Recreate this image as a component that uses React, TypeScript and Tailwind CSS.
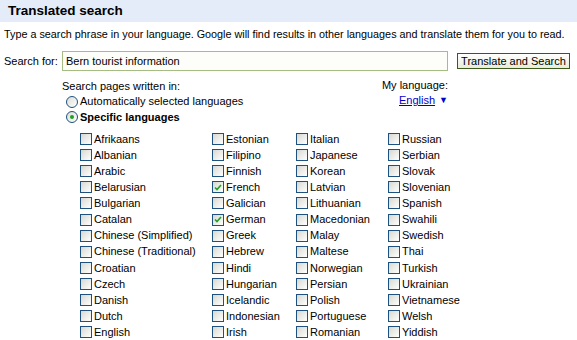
const columns: string[][] = [
    ["Afrikaans", "Albanian", "Arabic", "Belarusian", "Bulgarian", "Catalan", "Chinese (Simplified)", "Chinese (Traditional)", "Croatian", "Czech", "Danish", "Dutch", "English"],
    ["Estonian", "Filipino", "Finnish", "French", "Galician", "German", "Greek", "Hebrew", "Hindi", "Hungarian", "Icelandic", "Indonesian", "Irish"],
    ["Italian", "Japanese", "Korean", "Latvian", "Lithuanian", "Macedonian", "Malay", "Maltese", "Norwegian", "Persian", "Polish", "Portuguese", "Romanian"],
    ["Russian", "Serbian", "Slovak", "Slovenian", "Spanish", "Swahili", "Swedish", "Thai", "Turkish", "Ukrainian", "Vietnamese", "Welsh", "Yiddish"],
];

const checked = ["French", "German"];
const colWidths = ["w-[132px]", "w-[84px]", "w-[92px]", "w-[120px]"];

const CheckBox = ({ on }: { on: boolean }) => (
    <span className="flex h-[12px] w-[12px] shrink-0 items-center justify-center border border-[#1c5180] bg-gradient-to-br from-[#d8d8d2] to-white">
        {on && (
            <svg width="8" height="7" viewBox="0 0 8 7">
                <path d="M1 3.5 L3 5.5 L7 1" stroke="#21a121" strokeWidth="1.6" fill="none" />
            </svg>
        )}
    </span>
);

const Radio = ({ on }: { on: boolean }) => (
    <span className="flex h-[12px] w-[12px] shrink-0 items-center justify-center rounded-full border border-[#1c5180] bg-gradient-to-br from-[#dcdcd6] to-white">
        {on && <span className="h-[4px] w-[4px] rounded-full bg-[#21a121]" />}
    </span>
);

export default function App() {
    return (
        <div className="h-[340px] w-[577px] overflow-hidden whitespace-nowrap bg-white font-['Liberation_Sans',Arial,sans-serif] text-[11px] text-black">
            <div className="flex h-[22px] items-center bg-[#e5ecf9] pl-[8px] text-[13.5px] font-bold">
                Translated search
            </div>
            <div className="mt-[5px] pl-[4px] text-[10.8px] leading-[14px]">
                Type a search phrase in your language. Google will find results in other languages and translate them for you to read.
            </div>
            <div className="mt-[10px] flex items-center">
                <span className="w-[62px] pl-[4px]">Search for:</span>
                <div className="flex h-[20px] w-[386px] items-center border border-[#a5bd82] bg-[#fdfdf9] px-[3px]">
                    Bern tourist information
                </div>
                <button className="ml-[9px] flex h-[16px] w-[113px] items-center justify-center border border-[#3c5a1a] bg-gradient-to-b from-white to-[#e8ecd8] text-[11px] leading-none">
                    Translate and Search
                </button>
            </div>
            <div className="mt-[7px] flex w-[448px] pl-[62px]">
                <div className="flex-1">
                    <div className="leading-[16px]">Search pages written in:</div>
                    <div className="flex h-[15px] items-center gap-[2px] pl-[4px]">
                        <Radio on={false} />
                        <span>Automatically selected languages</span>
                    </div>
                    <div className="flex h-[16px] items-center gap-[2px] pl-[4px] font-bold">
                        <Radio on={true} />
                        <span>Specific languages</span>
                    </div>
                </div>
                <div className="flex flex-col items-end">
                    <div className="leading-[14px]">My language:</div>
                    <div className="flex items-center gap-[4px] leading-[16px]">
                        <span className="text-[#0000cc] underline">English</span>
                        <span className="text-[9px] text-[#0000cc]">▼</span>
                    </div>
                </div>
            </div>
            <div className="mt-[6px] flex pl-[80px]">
                {columns.map((col, i) => (
                    <div key={i} className={`flex flex-col ${colWidths[i]}`}>
                        {col.map((lang) => (
                            <label key={lang} className="flex h-[16.1px] items-center gap-[2px]">
                                <CheckBox on={checked.includes(lang)} />
                                <span>{lang}</span>
                            </label>
                        ))}
                    </div>
                ))}
            </div>
        </div>
    );
}
